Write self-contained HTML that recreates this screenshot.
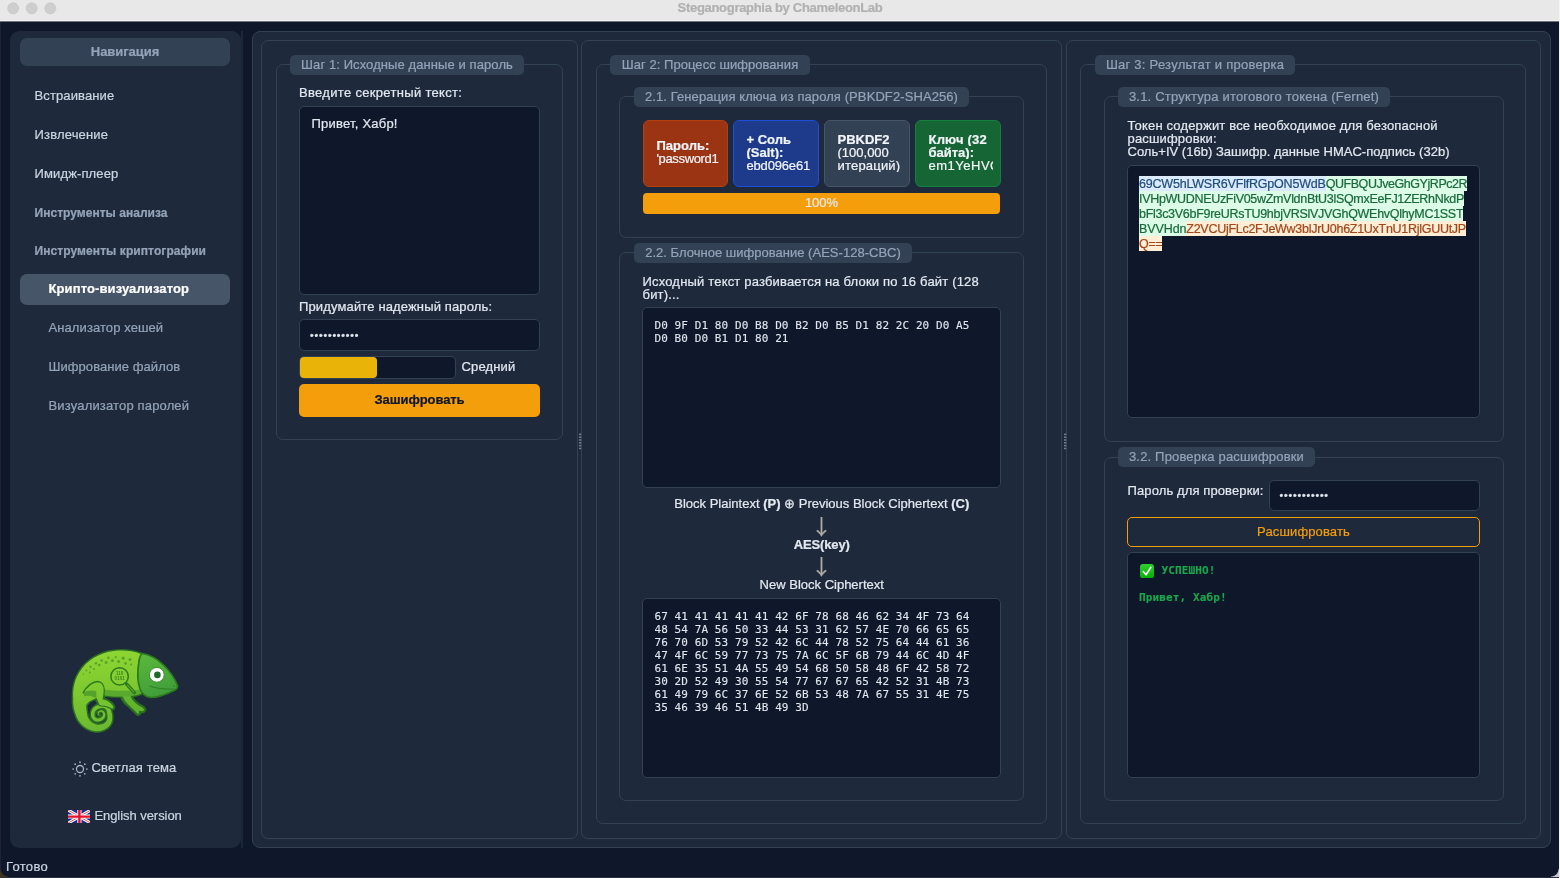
<!DOCTYPE html>
<html lang="ru">
<head>
<meta charset="utf-8">
<title>Steganographia by ChameleonLab</title>
<style>
*{box-sizing:border-box;margin:0;padding:0}
html,body{width:1560px;height:878px;overflow:hidden;background:#0f172a}
body{position:relative;font:13px/16px "Liberation Sans",sans-serif;color:#e2e8f0;will-change:transform;-webkit-font-smoothing:antialiased;-webkit-text-stroke:0.22px}
.a{position:absolute}
.t{position:absolute;white-space:nowrap;height:16px;line-height:16px}
.b{font-weight:bold}
.gb{position:absolute;border:1px solid #334155;border-radius:7px}
.pill{position:absolute;background:#334155;border-radius:5px;color:#94a3b8;height:20px;line-height:20px;white-space:nowrap;text-align:center}
.dark{position:absolute;background:#0f172a;border:1px solid #334155;border-radius:5px}
.mono{font-family:"DejaVu Sans Mono","Liberation Mono",monospace;font-size:11px;-webkit-text-stroke:0.1px}
.col{position:absolute;top:40px;height:799px;border:1px solid #334155;border-radius:7px}
.nav{color:#cbd5e1}
.sub{color:#94a3b8}
.hd{color:#94a3b8;font-weight:bold;font-size:12px}
.kbox{position:absolute;top:120px;width:86px;height:67px;border-radius:6px;border:1px solid;padding:0 0 2.6px 12.5px;line-height:13px;display:flex;flex-direction:column;justify-content:center;white-space:nowrap;color:#f1f5f9}
.kbox>*{display:block;width:64px;overflow:hidden}
.s1{background:#dbeafe;color:#1e4e7c}
.s2{background:#dcfce7;color:#176b3a}
.s3{background:#ffedd5;color:#a0481a}
#tok span{display:inline-block;height:15px;vertical-align:top;line-height:17.6px;overflow:hidden}
.arr{width:20px;height:28px;line-height:28px;text-align:center;font-family:"Noto Sans CJK SC","Liberation Sans",sans-serif;font-size:21px;color:#aeaaa5}
.dots{position:absolute;width:2px;height:1.4px;background:#6f7b8d}
</style>
</head>
<body>
<!-- title bar -->
<div class="a" style="left:0;top:0;width:1560px;height:20px;background:#e8e8e8"></div>
<div class="a" style="left:0;top:20px;width:1560px;height:1px;background:#f1f1f0"></div>
<div class="a" style="left:0;top:21px;width:1560px;height:1px;background:#70737c"></div>
<div class="a" style="left:0;top:22px;width:1px;height:850px;background:#1d2236"></div>
<svg class="a" style="left:0;top:0" width="60" height="16" viewBox="0 0 60 16"><g fill="#cecece" stroke="#c4c4c4" stroke-width="0.7"><circle cx="13.2" cy="8.3" r="5.5"/><circle cx="31.7" cy="8.3" r="5.5"/><circle cx="50.3" cy="8.3" r="5.5"/></g></svg>
<div class="t b" id="title" style="letter-spacing:-0.3px;left:580px;width:400px;top:0.4px;text-align:center;color:#b1b1b1;">Steganographia by ChameleonLab</div>

<!-- sidebar -->
<div class="a" style="left:10px;top:31px;width:231px;height:817px;background:#1e293b;border-radius:9px"></div>
<div class="a" style="left:241px;top:31px;width:2px;height:817px;background:#1c2639"></div>
<div class="pill b" style="letter-spacing:-0.05px;left:20px;top:38px;width:210px;height:28px;line-height:28px;border-radius:7px">Навигация</div>

<div class="t nav" style="letter-spacing:0.12px;left:34.5px;top:88px">Встраивание</div>
<div class="t nav" style="letter-spacing:0.17px;left:34.5px;top:127px">Извлечение</div>
<div class="t nav" style="letter-spacing:0.13px;left:34.5px;top:166px">Имидж-плеер</div>
<div class="t hd" style="letter-spacing:0.03px;left:34.5px;top:204.5px">Инструменты анализа</div>
<div class="t hd" style="letter-spacing:0.08px;left:34.5px;top:242.5px">Инструменты криптографии</div>
<div class="a" style="left:20px;top:274px;width:210px;height:31px;background:#475569;border-radius:7px"></div>
<div class="t b" style="letter-spacing:0.11px;left:48.5px;top:281px;color:#fff">Крипто-визуализатор</div>
<div class="t sub" style="letter-spacing:0.09px;left:48.5px;top:320.4px">Анализатор хешей</div>
<div class="t sub" style="letter-spacing:0.06px;left:48.5px;top:359.4px">Шифрование файлов</div>
<div class="t sub" style="letter-spacing:0.16px;left:48.5px;top:398.3px">Визуализатор паролей</div>

<!-- LOGO -->
<svg viewBox="0 0 130 100" width="130" height="100" style="position:absolute;left:60px;top:640px">
<defs>
<linearGradient id="gb" gradientUnits="userSpaceOnUse" x1="30" y1="10" x2="40" y2="92"><stop offset="0" stop-color="#8fd733"/><stop offset="0.45" stop-color="#7fca2f"/><stop offset="1" stop-color="#69b830"/></linearGradient>
<linearGradient id="gh" x1="0" y1="0" x2="0.3" y2="1"><stop offset="0" stop-color="#5cb83b"/><stop offset="1" stop-color="#409f3a"/></linearGradient>
</defs>
<g fill="url(#gb)" stroke="#2b6e22" stroke-width="3.0" stroke-linejoin="round" stroke-linecap="round"><path d="M61.5,54 C61.5,59 64,62.5 68.3,65.5 C71,68 74,71 77.8,74.6 C79.6,74.2 80.2,72.6 79.4,71.2 C81.3,72.2 83.6,71.8 84.9,70 C84.2,67.6 82,66 79.4,65.3 C75.5,62.5 72,60 71,54 Z" fill="#62b42d"/><path d="M15.6,42.8 L15.4,43.8 L15.2,44.8 L15.0,45.7 L14.8,46.8 L14.6,47.8 L14.4,48.8 L14.2,49.9 L14.0,51.0 L13.8,52.1 L13.7,53.2 L13.6,54.3 L13.5,55.3 L13.4,56.3 L13.3,57.4 L13.3,58.4 L13.2,59.4 L13.2,60.5 L13.2,61.5 L13.2,62.5 L13.3,63.5 L13.4,64.5 L13.5,65.5 L13.6,66.5 L13.8,67.4 L13.9,68.4 L14.1,69.3 L14.4,70.2 L14.6,71.1 L14.8,72.0 L15.1,72.8 L15.4,73.6 L15.7,74.4 L16.0,75.3 L16.3,76.1 L16.6,77.0 L17.0,77.8 L17.5,78.7 L17.9,79.5 L18.4,80.4 L19.0,81.2 L19.6,82.0 L20.2,82.8 L20.8,83.5 L21.5,84.2 L22.2,84.9 L22.9,85.5 L23.6,86.2 L24.3,86.7 L25.1,87.3 L25.8,87.8 L26.6,88.3 L27.4,88.7 L28.2,89.1 L29.0,89.5 L29.8,89.8 L30.6,90.1 L31.4,90.4 L32.2,90.6 L33.0,90.8 L33.7,90.9 L34.5,91.1 L35.3,91.2 L36.0,91.2 L36.8,91.3 L37.5,91.3 L38.2,91.2 L38.9,91.2 L39.6,91.1 L40.3,90.9 L41.0,90.8 L41.7,90.6 L42.4,90.4 L43.2,90.1 L43.9,89.8 L44.6,89.5 L45.3,89.1 L46.0,88.7 L46.7,88.3 L47.3,87.8 L47.9,87.4 L48.5,86.8 L49.0,86.3 L49.5,85.7 L49.9,85.1 L50.3,84.5 L50.7,83.8 L51.1,83.2 L51.4,82.5 L51.6,81.8 L51.8,81.1 L52.0,80.4 L52.1,79.6 L52.2,78.9 L52.2,78.1 L52.2,77.4 L52.2,76.7 L52.1,76.0 L52.1,75.3 L52.0,74.7 L51.9,74.1 L51.8,73.5 L51.6,72.8 L51.5,72.2 L51.3,71.6 L51.1,70.9 L50.9,70.3 L50.7,69.7 L50.4,69.1 L50.1,68.5 L49.7,67.9 L49.3,67.4 L48.9,66.9 L48.4,66.4 L48.0,66.0 L47.5,65.7 L47.0,65.3 L46.5,65.0 L45.9,64.8 L45.4,64.6 L44.9,64.4 L44.3,64.2 L43.7,64.2 L43.1,64.1 L42.6,64.1 L42.0,64.1 L41.5,64.2 L41.0,64.3 L40.5,64.4 L40.0,64.5 L39.6,64.6 L39.1,64.7 L38.6,64.9 L38.0,65.0 L37.5,65.2 L37.0,65.4 L36.4,65.7 L35.9,65.9 L35.4,66.2 L34.9,66.5 L34.4,66.9 L33.9,67.3 L33.5,67.7 L33.2,68.1 L32.8,68.5 L32.5,69.0 L32.2,69.5 L31.9,70.0 L31.7,70.5 L31.5,71.0 L31.3,71.5 L31.2,72.0 L31.1,72.6 L31.0,73.2 L31.0,73.7 L31.0,74.3 L31.0,74.9 L31.0,75.4 L31.1,76.0 L31.2,76.5 L31.4,77.0 L31.6,77.5 L31.8,78.0 L32.1,78.5 L32.4,78.9 L32.7,79.3 L33.1,79.7 L33.5,80.1 L33.9,80.4 L34.3,80.7 L34.8,80.9 L35.3,81.1 L35.8,81.3 L36.3,81.4 L36.8,81.5 L37.3,81.5 L37.9,81.5 L38.4,81.5 L38.9,81.4 L39.4,81.3 L39.8,81.2 L40.3,81.1 L40.8,80.9 L41.3,80.7 L41.7,80.4 L42.1,80.1 L42.6,79.9 L43.0,79.6 L43.3,79.2 L43.7,78.9 L44.0,78.6 L44.3,78.2 L44.5,77.8 L44.7,77.4 L44.9,77.0 L45.0,76.5 L45.1,76.1 L45.2,75.7 L45.3,75.3 L45.3,74.9 L45.3,74.5 L45.3,74.1 L45.2,73.7 L45.1,73.3 L44.9,72.9 L44.7,72.6 L44.5,72.2 L44.3,71.9 L44.1,71.6 L43.9,71.4 L43.6,71.1 L43.3,70.9 L43.0,70.7 L42.7,70.6 L42.4,70.5 L42.0,70.4 L41.7,70.3 L41.4,70.3 L41.0,70.2 L40.7,70.3 L40.4,70.3 L40.1,70.4 L39.8,70.5 L39.5,70.7 L39.2,70.9 L39.0,71.1 L38.7,71.3 L38.5,71.5 L38.3,71.8 L38.2,72.0 L38.0,72.2 L37.9,72.5 L37.8,72.7 L37.8,73.0 L37.8,73.3 L37.7,73.5 L37.8,73.8 L37.8,74.0 L37.8,74.2 L37.9,74.4 L38.0,74.6 L38.1,74.8 L38.2,75.0 L38.4,75.1 L38.5,75.1 L38.7,75.2 L38.9,75.2 L39.0,75.3 L39.2,75.3 L39.3,75.4 L39.4,75.4 L39.6,75.2 L39.5,75.1 L39.3,75.0 L39.2,74.9 L39.0,74.8 L38.9,74.7 L38.8,74.7 L38.7,74.6 L38.7,74.5 L38.6,74.5 L38.6,74.4 L38.6,74.3 L38.6,74.1 L38.6,73.9 L38.6,73.8 L38.7,73.6 L38.7,73.4 L38.7,73.2 L38.8,73.0 L38.9,72.9 L39.0,72.8 L39.1,72.7 L39.2,72.5 L39.4,72.4 L39.6,72.2 L39.7,72.1 L39.9,71.9 L40.1,71.8 L40.3,71.8 L40.5,71.7 L40.6,71.7 L40.8,71.7 L40.9,71.7 L41.1,71.8 L41.4,71.8 L41.6,71.9 L41.8,72.0 L42.0,72.1 L42.1,72.2 L42.3,72.3 L42.4,72.5 L42.5,72.6 L42.6,72.8 L42.7,73.0 L42.8,73.2 L42.9,73.4 L43.0,73.7 L43.1,73.9 L43.1,74.1 L43.1,74.3 L43.1,74.5 L43.1,74.7 L43.0,75.0 L43.0,75.2 L42.9,75.5 L42.8,75.7 L42.6,76.0 L42.5,76.2 L42.4,76.5 L42.2,76.7 L42.0,76.8 L41.8,77.0 L41.6,77.2 L41.3,77.4 L41.0,77.6 L40.7,77.8 L40.4,78.0 L40.1,78.1 L39.7,78.2 L39.4,78.3 L39.2,78.4 L38.9,78.4 L38.5,78.5 L38.2,78.5 L37.9,78.5 L37.5,78.4 L37.2,78.4 L36.9,78.3 L36.6,78.3 L36.4,78.2 L36.2,78.1 L36.0,78.0 L35.8,77.8 L35.7,77.6 L35.5,77.4 L35.3,77.2 L35.1,77.0 L34.9,76.7 L34.8,76.5 L34.7,76.2 L34.6,76.0 L34.5,75.7 L34.5,75.4 L34.4,75.0 L34.4,74.7 L34.4,74.3 L34.4,73.9 L34.5,73.5 L34.5,73.2 L34.6,72.8 L34.7,72.5 L34.8,72.2 L34.9,71.9 L35.1,71.6 L35.2,71.3 L35.4,71.0 L35.7,70.7 L35.9,70.4 L36.1,70.2 L36.4,69.9 L36.6,69.7 L36.9,69.5 L37.2,69.3 L37.5,69.2 L37.9,69.0 L38.3,68.8 L38.7,68.7 L39.2,68.5 L39.6,68.4 L40.0,68.3 L40.4,68.2 L40.8,68.1 L41.2,68.0 L41.6,68.0 L42.0,67.9 L42.4,67.9 L42.7,67.9 L43.0,67.9 L43.2,67.9 L43.5,67.9 L43.7,68.0 L44.0,68.1 L44.3,68.3 L44.6,68.4 L44.9,68.6 L45.2,68.8 L45.4,69.1 L45.7,69.3 L45.9,69.6 L46.1,69.8 L46.3,70.1 L46.4,70.4 L46.6,70.8 L46.7,71.2 L46.8,71.6 L46.9,72.1 L47.0,72.6 L47.1,73.1 L47.2,73.6 L47.3,74.2 L47.3,74.7 L47.4,75.3 L47.4,75.8 L47.5,76.4 L47.5,76.9 L47.5,77.5 L47.5,78.0 L47.4,78.5 L47.4,78.9 L47.3,79.3 L47.2,79.7 L47.0,80.0 L46.8,80.4 L46.6,80.8 L46.3,81.2 L46.1,81.6 L45.8,81.9 L45.5,82.2 L45.1,82.5 L44.8,82.8 L44.5,83.0 L44.1,83.3 L43.7,83.5 L43.3,83.7 L42.8,83.9 L42.3,84.0 L41.8,84.2 L41.3,84.3 L40.8,84.4 L40.2,84.5 L39.8,84.6 L39.3,84.7 L38.8,84.7 L38.4,84.7 L38.0,84.7 L37.6,84.7 L37.2,84.7 L36.7,84.6 L36.3,84.5 L35.9,84.4 L35.5,84.3 L35.0,84.1 L34.5,83.9 L34.0,83.6 L33.5,83.4 L33.0,83.1 L32.5,82.8 L32.0,82.5 L31.6,82.1 L31.2,81.8 L30.8,81.4 L30.4,81.0 L30.0,80.6 L29.7,80.1 L29.3,79.6 L29.0,79.0 L28.6,78.5 L28.3,78.0 L28.0,77.4 L27.8,76.9 L27.6,76.4 L27.4,75.9 L27.3,75.4 L27.2,74.8 L27.1,74.2 L27.0,73.6 L26.9,73.0 L26.8,72.3 L26.7,71.6 L26.6,70.9 L26.5,70.2 L26.4,69.5 L26.3,68.8 L26.3,68.1 L26.2,67.4 L26.2,66.7 L26.1,66.0 L26.1,65.3 L26.1,64.5 L26.1,63.8 L26.1,63.1 L26.1,62.3 L26.1,61.6 L26.2,60.8 L26.2,60.0 L26.3,59.1 L26.3,58.3 L26.4,57.4 L26.5,56.6 L26.6,55.7 L26.7,54.8 L26.8,53.9 L27.0,53.1 L27.1,52.2 L27.3,51.3 L27.5,50.3 L27.6,49.3 L27.8,48.3 L28.0,47.3 L28.3,46.2 L28.4,45.2Z"/><path d="M81,14 C72,10.5 62,10 54,11 C40,12.5 27,20 19.5,32 C15,39 12.9,47 13.2,57 L26.4,65 C28,62 32,59.5 36.1,58.6 L43.3,58.6 L44,55 C50,56.5 58,56.5 64,56 C70,56 76,55.5 81,53.5 Z"/><path d="M36.1,58.6 C37,60.5 37.6,62 38.3,63.8 C38.6,65.2 39.5,66 41,66 C44,66 47,66.5 49.7,68.1 C51.5,69.2 53,69.3 53.8,68.3 C54.3,67 53.9,66 53,65 C51,62.6 47.5,60 43.3,59 L43.6,54 L36,54 Z"/></g>
<g fill="url(#gb)"><path d="M61.5,54 C61.5,59 64,62.5 68.3,65.5 C71,68 74,71 77.8,74.6 C79.6,74.2 80.2,72.6 79.4,71.2 C81.3,72.2 83.6,71.8 84.9,70 C84.2,67.6 82,66 79.4,65.3 C75.5,62.5 72,60 71,54 Z" fill="#62b42d"/><path d="M15.6,42.8 L15.4,43.8 L15.2,44.8 L15.0,45.7 L14.8,46.8 L14.6,47.8 L14.4,48.8 L14.2,49.9 L14.0,51.0 L13.8,52.1 L13.7,53.2 L13.6,54.3 L13.5,55.3 L13.4,56.3 L13.3,57.4 L13.3,58.4 L13.2,59.4 L13.2,60.5 L13.2,61.5 L13.2,62.5 L13.3,63.5 L13.4,64.5 L13.5,65.5 L13.6,66.5 L13.8,67.4 L13.9,68.4 L14.1,69.3 L14.4,70.2 L14.6,71.1 L14.8,72.0 L15.1,72.8 L15.4,73.6 L15.7,74.4 L16.0,75.3 L16.3,76.1 L16.6,77.0 L17.0,77.8 L17.5,78.7 L17.9,79.5 L18.4,80.4 L19.0,81.2 L19.6,82.0 L20.2,82.8 L20.8,83.5 L21.5,84.2 L22.2,84.9 L22.9,85.5 L23.6,86.2 L24.3,86.7 L25.1,87.3 L25.8,87.8 L26.6,88.3 L27.4,88.7 L28.2,89.1 L29.0,89.5 L29.8,89.8 L30.6,90.1 L31.4,90.4 L32.2,90.6 L33.0,90.8 L33.7,90.9 L34.5,91.1 L35.3,91.2 L36.0,91.2 L36.8,91.3 L37.5,91.3 L38.2,91.2 L38.9,91.2 L39.6,91.1 L40.3,90.9 L41.0,90.8 L41.7,90.6 L42.4,90.4 L43.2,90.1 L43.9,89.8 L44.6,89.5 L45.3,89.1 L46.0,88.7 L46.7,88.3 L47.3,87.8 L47.9,87.4 L48.5,86.8 L49.0,86.3 L49.5,85.7 L49.9,85.1 L50.3,84.5 L50.7,83.8 L51.1,83.2 L51.4,82.5 L51.6,81.8 L51.8,81.1 L52.0,80.4 L52.1,79.6 L52.2,78.9 L52.2,78.1 L52.2,77.4 L52.2,76.7 L52.1,76.0 L52.1,75.3 L52.0,74.7 L51.9,74.1 L51.8,73.5 L51.6,72.8 L51.5,72.2 L51.3,71.6 L51.1,70.9 L50.9,70.3 L50.7,69.7 L50.4,69.1 L50.1,68.5 L49.7,67.9 L49.3,67.4 L48.9,66.9 L48.4,66.4 L48.0,66.0 L47.5,65.7 L47.0,65.3 L46.5,65.0 L45.9,64.8 L45.4,64.6 L44.9,64.4 L44.3,64.2 L43.7,64.2 L43.1,64.1 L42.6,64.1 L42.0,64.1 L41.5,64.2 L41.0,64.3 L40.5,64.4 L40.0,64.5 L39.6,64.6 L39.1,64.7 L38.6,64.9 L38.0,65.0 L37.5,65.2 L37.0,65.4 L36.4,65.7 L35.9,65.9 L35.4,66.2 L34.9,66.5 L34.4,66.9 L33.9,67.3 L33.5,67.7 L33.2,68.1 L32.8,68.5 L32.5,69.0 L32.2,69.5 L31.9,70.0 L31.7,70.5 L31.5,71.0 L31.3,71.5 L31.2,72.0 L31.1,72.6 L31.0,73.2 L31.0,73.7 L31.0,74.3 L31.0,74.9 L31.0,75.4 L31.1,76.0 L31.2,76.5 L31.4,77.0 L31.6,77.5 L31.8,78.0 L32.1,78.5 L32.4,78.9 L32.7,79.3 L33.1,79.7 L33.5,80.1 L33.9,80.4 L34.3,80.7 L34.8,80.9 L35.3,81.1 L35.8,81.3 L36.3,81.4 L36.8,81.5 L37.3,81.5 L37.9,81.5 L38.4,81.5 L38.9,81.4 L39.4,81.3 L39.8,81.2 L40.3,81.1 L40.8,80.9 L41.3,80.7 L41.7,80.4 L42.1,80.1 L42.6,79.9 L43.0,79.6 L43.3,79.2 L43.7,78.9 L44.0,78.6 L44.3,78.2 L44.5,77.8 L44.7,77.4 L44.9,77.0 L45.0,76.5 L45.1,76.1 L45.2,75.7 L45.3,75.3 L45.3,74.9 L45.3,74.5 L45.3,74.1 L45.2,73.7 L45.1,73.3 L44.9,72.9 L44.7,72.6 L44.5,72.2 L44.3,71.9 L44.1,71.6 L43.9,71.4 L43.6,71.1 L43.3,70.9 L43.0,70.7 L42.7,70.6 L42.4,70.5 L42.0,70.4 L41.7,70.3 L41.4,70.3 L41.0,70.2 L40.7,70.3 L40.4,70.3 L40.1,70.4 L39.8,70.5 L39.5,70.7 L39.2,70.9 L39.0,71.1 L38.7,71.3 L38.5,71.5 L38.3,71.8 L38.2,72.0 L38.0,72.2 L37.9,72.5 L37.8,72.7 L37.8,73.0 L37.8,73.3 L37.7,73.5 L37.8,73.8 L37.8,74.0 L37.8,74.2 L37.9,74.4 L38.0,74.6 L38.1,74.8 L38.2,75.0 L38.4,75.1 L38.5,75.1 L38.7,75.2 L38.9,75.2 L39.0,75.3 L39.2,75.3 L39.3,75.4 L39.4,75.4 L39.6,75.2 L39.5,75.1 L39.3,75.0 L39.2,74.9 L39.0,74.8 L38.9,74.7 L38.8,74.7 L38.7,74.6 L38.7,74.5 L38.6,74.5 L38.6,74.4 L38.6,74.3 L38.6,74.1 L38.6,73.9 L38.6,73.8 L38.7,73.6 L38.7,73.4 L38.7,73.2 L38.8,73.0 L38.9,72.9 L39.0,72.8 L39.1,72.7 L39.2,72.5 L39.4,72.4 L39.6,72.2 L39.7,72.1 L39.9,71.9 L40.1,71.8 L40.3,71.8 L40.5,71.7 L40.6,71.7 L40.8,71.7 L40.9,71.7 L41.1,71.8 L41.4,71.8 L41.6,71.9 L41.8,72.0 L42.0,72.1 L42.1,72.2 L42.3,72.3 L42.4,72.5 L42.5,72.6 L42.6,72.8 L42.7,73.0 L42.8,73.2 L42.9,73.4 L43.0,73.7 L43.1,73.9 L43.1,74.1 L43.1,74.3 L43.1,74.5 L43.1,74.7 L43.0,75.0 L43.0,75.2 L42.9,75.5 L42.8,75.7 L42.6,76.0 L42.5,76.2 L42.4,76.5 L42.2,76.7 L42.0,76.8 L41.8,77.0 L41.6,77.2 L41.3,77.4 L41.0,77.6 L40.7,77.8 L40.4,78.0 L40.1,78.1 L39.7,78.2 L39.4,78.3 L39.2,78.4 L38.9,78.4 L38.5,78.5 L38.2,78.5 L37.9,78.5 L37.5,78.4 L37.2,78.4 L36.9,78.3 L36.6,78.3 L36.4,78.2 L36.2,78.1 L36.0,78.0 L35.8,77.8 L35.7,77.6 L35.5,77.4 L35.3,77.2 L35.1,77.0 L34.9,76.7 L34.8,76.5 L34.7,76.2 L34.6,76.0 L34.5,75.7 L34.5,75.4 L34.4,75.0 L34.4,74.7 L34.4,74.3 L34.4,73.9 L34.5,73.5 L34.5,73.2 L34.6,72.8 L34.7,72.5 L34.8,72.2 L34.9,71.9 L35.1,71.6 L35.2,71.3 L35.4,71.0 L35.7,70.7 L35.9,70.4 L36.1,70.2 L36.4,69.9 L36.6,69.7 L36.9,69.5 L37.2,69.3 L37.5,69.2 L37.9,69.0 L38.3,68.8 L38.7,68.7 L39.2,68.5 L39.6,68.4 L40.0,68.3 L40.4,68.2 L40.8,68.1 L41.2,68.0 L41.6,68.0 L42.0,67.9 L42.4,67.9 L42.7,67.9 L43.0,67.9 L43.2,67.9 L43.5,67.9 L43.7,68.0 L44.0,68.1 L44.3,68.3 L44.6,68.4 L44.9,68.6 L45.2,68.8 L45.4,69.1 L45.7,69.3 L45.9,69.6 L46.1,69.8 L46.3,70.1 L46.4,70.4 L46.6,70.8 L46.7,71.2 L46.8,71.6 L46.9,72.1 L47.0,72.6 L47.1,73.1 L47.2,73.6 L47.3,74.2 L47.3,74.7 L47.4,75.3 L47.4,75.8 L47.5,76.4 L47.5,76.9 L47.5,77.5 L47.5,78.0 L47.4,78.5 L47.4,78.9 L47.3,79.3 L47.2,79.7 L47.0,80.0 L46.8,80.4 L46.6,80.8 L46.3,81.2 L46.1,81.6 L45.8,81.9 L45.5,82.2 L45.1,82.5 L44.8,82.8 L44.5,83.0 L44.1,83.3 L43.7,83.5 L43.3,83.7 L42.8,83.9 L42.3,84.0 L41.8,84.2 L41.3,84.3 L40.8,84.4 L40.2,84.5 L39.8,84.6 L39.3,84.7 L38.8,84.7 L38.4,84.7 L38.0,84.7 L37.6,84.7 L37.2,84.7 L36.7,84.6 L36.3,84.5 L35.9,84.4 L35.5,84.3 L35.0,84.1 L34.5,83.9 L34.0,83.6 L33.5,83.4 L33.0,83.1 L32.5,82.8 L32.0,82.5 L31.6,82.1 L31.2,81.8 L30.8,81.4 L30.4,81.0 L30.0,80.6 L29.7,80.1 L29.3,79.6 L29.0,79.0 L28.6,78.5 L28.3,78.0 L28.0,77.4 L27.8,76.9 L27.6,76.4 L27.4,75.9 L27.3,75.4 L27.2,74.8 L27.1,74.2 L27.0,73.6 L26.9,73.0 L26.8,72.3 L26.7,71.6 L26.6,70.9 L26.5,70.2 L26.4,69.5 L26.3,68.8 L26.3,68.1 L26.2,67.4 L26.2,66.7 L26.1,66.0 L26.1,65.3 L26.1,64.5 L26.1,63.8 L26.1,63.1 L26.1,62.3 L26.1,61.6 L26.2,60.8 L26.2,60.0 L26.3,59.1 L26.3,58.3 L26.4,57.4 L26.5,56.6 L26.6,55.7 L26.7,54.8 L26.8,53.9 L27.0,53.1 L27.1,52.2 L27.3,51.3 L27.5,50.3 L27.6,49.3 L27.8,48.3 L28.0,47.3 L28.3,46.2 L28.4,45.2Z"/><path d="M81,14 C72,10.5 62,10 54,11 C40,12.5 27,20 19.5,32 C15,39 12.9,47 13.2,57 L26.4,65 C28,62 32,59.5 36.1,58.6 L43.3,58.6 L44,55 C50,56.5 58,56.5 64,56 C70,56 76,55.5 81,53.5 Z"/><path d="M36.1,58.6 C37,60.5 37.6,62 38.3,63.8 C38.6,65.2 39.5,66 41,66 C44,66 47,66.5 49.7,68.1 C51.5,69.2 53,69.3 53.8,68.3 C54.3,67 53.9,66 53,65 C51,62.6 47.5,60 43.3,59 L43.6,54 L36,54 Z"/></g>
<path d="M36.1,58.6 C37,60.5 37.6,62 38.3,63.8 C38.6,65.2 39.5,66 41,66 C44,66 47,66.5 49.7,68.1 C51.5,69.2 53,69.3 53.8,68.3 C54.3,67 53.9,66 53,65 C51,62.6 47.5,60 43.3,59" fill="none" stroke="#2b6e22" stroke-width="1.2" stroke-linecap="round" stroke-linejoin="round"/>
<path d="M62.3,57 C63.3,60.5 65.5,63.3 68.3,65.5 C71,68 74,71 77.8,74.6 C79.6,74.2 80.2,72.6 79.4,71.2 C81.3,72.2 83.6,71.8 84.9,70 C84.2,67.6 82,66 79.4,65.3 C75.8,62.8 72.6,60.5 71.3,56.3" fill="none" stroke="#2b6e22" stroke-width="1.2" stroke-linecap="round" stroke-linejoin="round"/>
<path d="M44,55.2 C50,56.7 58,56.7 64,56.2 C70,56.2 76,55.7 81,53.7 L81,49.5 C70,51 55,51.5 44.5,49.5 Z" fill="#55a22e" opacity="0.85"/>
<path d="M23.1,52.9 C27,50.5 32,50 36.3,51.2 L36.4,58.6 C33,56 28,54.8 24.5,56.3 Z" fill="#4d9a2b" opacity="0.85"/>
<path d="M23.1,52.7 C27,46 32,42 37.5,41.5 C41.5,41.5 44,45 44.3,49.7 C44.5,53 43.8,56 43.3,58.6" fill="none" stroke="#2c7a1f" stroke-width="1.3" stroke-linecap="round"/>
<path d="M82,13.5 C90,14.5 98,19.5 104,25.5 C110,31.5 115,39 117.5,45.5 C118,48 116.5,49.5 114,50.5 C107,54 98,57.5 91,57.5 C86,57 82,54 80,49 C77.5,42 77.5,30 79,21 C79.5,17.5 80.5,15 82,13.5 Z" fill="url(#gh)" stroke="#2c7a1f" stroke-width="1.7" stroke-linejoin="round"/>
<path d="M89.5,46 C96,48.5 106,49.5 114,49" fill="none" stroke="#2f7f20" stroke-width="1"/>
<circle cx="114" cy="46" r="0.7" fill="#2a6e1e"/>
<g fill="#5aa62a"><circle cx="48.4" cy="17.7" r="1.3"/><circle cx="55.8" cy="17.1" r="1.1"/><circle cx="63.2" cy="18.2" r="1.6"/><circle cx="70" cy="19.4" r="1.5"/><circle cx="41.6" cy="20.5" r="1.3"/><circle cx="52.4" cy="20.5" r="1.5"/><circle cx="58.7" cy="21.6" r="1.5"/><circle cx="65.5" cy="23.3" r="1.4"/><circle cx="71.2" cy="24.5" r="1.0"/><circle cx="46.1" cy="22.6" r="1.5"/><circle cx="35.9" cy="23.3" r="1.2"/><circle cx="39.3" cy="25" r="1.3"/><circle cx="30.5" cy="26.8" r="1.2"/><circle cx="33.9" cy="29" r="1.1"/><circle cx="26.4" cy="30.5" r="1.0"/><circle cx="29.8" cy="32.5" r="1.0"/><circle cx="23.3" cy="34.2" r="0.8"/></g>
<circle cx="96.8" cy="34.8" r="7.4" fill="#fff" stroke="#3c8f2c" stroke-width="1"/>
<circle cx="97.4" cy="34.9" r="3.3" fill="#1f6a2b"/>
<path d="M66.6,44 L74.3,52.6" stroke="#2c7a1f" stroke-width="3.4" stroke-linecap="round"/>
<path d="M67.6,45.2 L73.6,51.8" stroke="#5da52c" stroke-width="1.1" stroke-linecap="round"/>
<circle cx="59.6" cy="36.4" r="8.7" fill="#86cf30" stroke="#2c7a1f" stroke-width="1.5"/>
<text x="59.7" y="35.4" font-family="Liberation Sans, sans-serif" font-weight="bold" font-size="4.6" fill="#3a8a26" text-anchor="middle">110</text>
<text x="59.7" y="40.3" font-family="Liberation Sans, sans-serif" font-weight="bold" font-size="4.6" fill="#3a8a26" text-anchor="middle">0101</text>
</svg>
<svg class="a" style="left:71.9px;top:760.8px" width="16" height="16" viewBox="0 0 16 16"><circle cx="8" cy="8" r="3.5" fill="none" stroke="#aab5c5" stroke-width="1.3"/><g fill="#aab5c5"><circle cx="14.80" cy="8.00" r="0.85"/><circle cx="12.81" cy="12.81" r="0.85"/><circle cx="8.00" cy="14.80" r="0.85"/><circle cx="3.19" cy="12.81" r="0.85"/><circle cx="1.20" cy="8.00" r="0.85"/><circle cx="3.19" cy="3.19" r="0.85"/><circle cx="8.00" cy="1.20" r="0.85"/><circle cx="12.81" cy="3.19" r="0.85"/></g></svg>
<div class="t" id="theme" style="letter-spacing:0.14px;left:91.5px;top:760px;color:#cbd5e1">Светлая тема</div>
<svg class="a" style="left:67.7px;top:809.9px" width="22.8" height="13.2" viewBox="0 0 60 36" preserveAspectRatio="none"><clipPath id="fc"><rect width="60" height="36"/></clipPath><g clip-path="url(#fc)"><rect width="60" height="36" fill="#1c2f8c"/><path d="M0,0 L60,36 M60,0 L0,36" stroke="#fff" stroke-width="8"/><path d="M0,0 L60,36 M60,0 L0,36" stroke="#e8112d" stroke-width="2"/><path d="M30,0 V36 M0,18 H60" stroke="#fff" stroke-width="11"/><path d="M30,0 V36 M0,18 H60" stroke="#e8112d" stroke-width="6.5"/></g></svg>
<div class="t" id="lang" style="letter-spacing:-0.05px;left:94.4px;top:808px;color:#cbd5e1">English version</div>

<div class="t" style="letter-spacing:0.31px;left:6px;top:859.4px;color:#cbd5e1">Готово</div>
<div class="a" style="left:0;top:877px;width:1560px;height:1px;background:#2a3040"></div>

<div class="a" style="left:1559px;top:0;width:1px;height:878px;background:#f4f4f4"></div>
<div class="a" style="left:1551px;top:869px;width:8px;height:8px;background:radial-gradient(circle at 0 0,rgba(15,23,42,0) 7px,#c9c9cc 8px)"></div>
<div class="a" style="left:0;top:869px;width:8px;height:8px;background:radial-gradient(circle at 8px 0,rgba(15,23,42,0) 7px,#43361c 8px)"></div>
<!-- main container -->
<div class="a" style="left:252px;top:31px;width:1299px;height:817px;background:#1e293b;border:1px solid #334155;border-radius:8px"></div>
<div class="col" style="left:261px;width:317px"></div>
<div class="col" style="left:581px;width:481px"></div>
<div class="col" style="left:1066px;width:475px"></div>

<!-- STEP 1 -->
<div class="gb" style="left:276px;top:64px;width:287px;height:376px"></div>
<div class="pill" style="letter-spacing:0.09px;left:290px;top:55px;width:234px">Шаг 1: Исходные данные и пароль</div>
<div class="t" style="letter-spacing:0.32px;left:299px;top:85.4px">Введите секретный текст:</div>
<div class="dark" style="left:299px;top:106px;width:241px;height:189px"></div>
<div class="t" style="letter-spacing:0.22px;left:311.5px;top:116.4px">Привет, Хабр!</div>
<div class="t" style="letter-spacing:0.14px;left:299px;top:298.5px">Придумайте надежный пароль:</div>
<div class="dark" style="left:299px;top:319px;width:241px;height:32px"></div>
<div class="t" id="pw1" style="left:310px;top:326.8px;font-size:10.5px;letter-spacing:0.8px">•••••••••••</div>
<div class="dark" style="left:299px;top:356px;width:157px;height:23px"></div>
<div class="a" style="left:300px;top:357px;width:77px;height:21px;background:#eab308;border-radius:4px"></div>
<div class="t" style="letter-spacing:0.14px;left:461.5px;top:359px">Средний</div>
<div class="a b" style="letter-spacing:-0.08px;left:299px;top:384px;width:241px;height:33px;background:#f59e0b;border-radius:5px;color:#0f172a;text-align:center;line-height:32px">Зашифровать</div>

<!-- splitters -->
<svg class="a" style="left:579.4px;top:433px" width="3" height="17" viewBox="0 0 3 17" fill="#75808f"><rect x="0" y="0.60" width="2.2" height="1.5"/><rect x="0" y="3.42" width="2.2" height="1.5"/><rect x="0" y="6.24" width="2.2" height="1.5"/><rect x="0" y="9.06" width="2.2" height="1.5"/><rect x="0" y="11.88" width="2.2" height="1.5"/><rect x="0" y="14.70" width="2.2" height="1.5"/></svg><svg class="a" style="left:1063.9px;top:433px" width="3" height="17" viewBox="0 0 3 17" fill="#75808f"><rect x="0" y="0.60" width="2.2" height="1.5"/><rect x="0" y="3.42" width="2.2" height="1.5"/><rect x="0" y="6.24" width="2.2" height="1.5"/><rect x="0" y="9.06" width="2.2" height="1.5"/><rect x="0" y="11.88" width="2.2" height="1.5"/><rect x="0" y="14.70" width="2.2" height="1.5"/></svg>

<!-- STEP 2 -->
<div class="gb" style="left:596px;top:64px;width:451px;height:760px"></div>
<div class="pill" style="letter-spacing:0.05px;left:610px;top:55px;width:200px">Шаг 2: Процесс шифрования</div>

<div class="gb" style="left:619px;top:96px;width:405px;height:142px"></div>
<div class="pill" style="letter-spacing:0.09px;left:634px;top:87px;width:335px">2.1. Генерация ключа из пароля (PBKDF2-SHA256)</div>
<div class="kbox" style="left:643px;width:85px;background:#9a3412;border-color:#b4400f"><b>Пароль:</b><span style="letter-spacing:-0.36px">'password1</span></div>
<div class="kbox" style="left:733px;background:#1e3a8a;border-color:#1d4ed8"><b>+ Соль</b><b>(Salt):</b><span style="letter-spacing:-0.17px">ebd096e61</span></div>
<div class="kbox" style="left:824px;background:#334155;border-color:#475569"><b>PBKDF2</b><span>(100,000</span><span style="letter-spacing:0.2px">итераций)</span></div>
<div class="kbox" style="left:915px;background:#166534;border-color:#15803d"><b style="letter-spacing:0.2px">Ключ (32</b><b>байта):</b><span style="letter-spacing:0.5px">em1YeHVC</span></div>
<div class="a" style="left:643px;top:193px;width:357px;height:21px;background:#f59e0b;border-radius:4px;text-align:center;line-height:20px;color:#e2e8f0">100%</div>

<div class="gb" style="left:619px;top:252px;width:405px;height:549px"></div>
<div class="pill" style="letter-spacing:0.02px;left:634px;top:243px;width:278px">2.2. Блочное шифрование (AES-128-CBC)</div>
<div class="t" style="letter-spacing:0.18px;left:642.5px;top:274.8px;line-height:13px;height:26px;white-space:normal;width:360px">Исходный текст разбивается на блоки по 16 байт (128 бит)...</div>
<div class="dark" style="left:642px;top:307px;width:359px;height:181px"></div>
<div class="a mono" style="left:654.5px;top:319px;line-height:13.2px;white-space:pre;letter-spacing:0.08px">D0 9F D1 80 D0 B8 D0 B2 D0 B5 D1 82 2C 20 D0 A5
D0 B0 D0 B1 D1 80 21</div>
<div class="t" style="left:642.5px;width:358.5px;top:495.5px;text-align:center">Block Plaintext <b>(P)</b> ⊕ Previous Block Ciphertext <b>(C)</b></div>
<div class="a arr" style="left:811.1px;top:511.4px">↓</div>
<div class="t b" style="letter-spacing:-0.14px;left:642.5px;width:358.5px;top:537px;text-align:center">AES(key)</div>
<div class="a arr" style="left:811.1px;top:551.3px">↓</div>
<div class="t" style="left:642.5px;width:358.5px;top:577px;text-align:center">New Block Ciphertext</div>
<div class="dark" style="left:642px;top:598px;width:359px;height:180px"></div>
<div class="a mono" style="left:654.5px;top:610px;line-height:13px;white-space:pre;letter-spacing:0.08px">67 41 41 41 41 41 42 6F 78 68 46 62 34 4F 73 64
48 54 7A 56 50 33 44 53 31 62 57 4E 70 66 65 65
76 70 6D 53 79 52 42 6C 44 78 52 75 64 44 61 36
47 4F 6C 59 77 73 75 7A 6C 5F 6B 79 44 6C 4D 4F
61 6E 35 51 4A 55 49 54 68 50 58 48 6F 42 58 72
30 2D 52 49 30 55 54 77 67 67 65 42 52 31 4B 73
61 49 79 6C 37 6E 52 6B 53 48 7A 67 55 31 4E 75
35 46 39 46 51 4B 49 3D</div>

<!-- STEP 3 -->
<div class="gb" style="left:1080px;top:64px;width:446px;height:760px"></div>
<div class="pill" style="letter-spacing:0.25px;left:1095px;top:55px;width:200px">Шаг 3: Результат и проверка</div>

<div class="gb" style="left:1104px;top:96px;width:400px;height:346px"></div>
<div class="pill" style="letter-spacing:0.2px;left:1118px;top:87px;width:272px">3.1. Структура итогового токена (Fernet)</div>
<div class="t" style="left:1127.5px;top:119px;line-height:13px;height:39px;white-space:normal;width:340px"><span style="letter-spacing:0.17px">Токен содержит все необходимое для безопасной расшифровки:</span><br><span style="letter-spacing:0.02px">Соль+IV (16b) Зашифр. данные HMAC-подпись (32b)</span></div>
<div class="dark" style="left:1127px;top:165px;width:353px;height:253px"></div>
<div class="a" id="tok" style="left:1139px;top:176px;font-size:12.5px;line-height:15px;letter-spacing:-0.31px;white-space:nowrap"><span class="s1" style="letter-spacing:-0.2px">69CW5hLWSR6VFlfRGpON5WdB</span><span class="s2" style="letter-spacing:-0.45px">QUFBQUJveGhGYjRPc2R</span><br><span class="s2">IVHpWUDNEUzFiV05wZmVldnBtU3lSQmxEeFJ1ZERhNkdP</span><br><span class="s2" style="letter-spacing:-0.29px">bFl3c3V6bF9reURsTU9hbjVRSlVJVGhQWEhvQlhyMC1SST</span><br><span class="s2" style="letter-spacing:-0.1px">BVVHdn</span><span class="s3" style="letter-spacing:-0.28px">Z2VCUjFLc2FJeWw3blJrU0h6Z1UxTnU1RjlGUUtJP</span><br><span class="s3">Q==</span></div>

<div class="gb" style="left:1104px;top:457px;width:400px;height:344px"></div>
<div class="pill" style="letter-spacing:0.17px;left:1118px;top:447px;width:197px">3.2. Проверка расшифровки</div>
<div class="t" style="letter-spacing:0.11px;left:1127.5px;top:482.5px">Пароль для проверки:</div>
<div class="dark" style="left:1269px;top:480px;width:211px;height:31px"></div>
<div class="t" id="pw2" style="left:1279.6px;top:487.2px;font-size:10.5px;letter-spacing:0.8px">•••••••••••</div>
<div class="a" style="letter-spacing:0.14px;left:1127px;top:517px;width:353px;height:30px;border:1px solid #f59e0b;border-radius:5px;color:#f59e0b;text-align:center;line-height:28px">Расшифровать</div>
<div class="dark" style="left:1127px;top:552px;width:353px;height:226px"></div>
<svg class="a" style="left:1140.2px;top:563.5px" width="14" height="14.4" viewBox="0 0 14 14.4"><defs><linearGradient id="cg" x1="0" y1="0" x2="0" y2="1"><stop offset="0" stop-color="#2fd02f"/><stop offset="1" stop-color="#06ad06"/></linearGradient></defs><rect width="14" height="14.4" rx="3" fill="url(#cg)"/><path d="M3.2,7.6 L6,10.8 L10.8,3.4" fill="none" stroke="#fff" stroke-width="1.6" stroke-linecap="round" stroke-linejoin="round"/></svg>
<div class="t mono b" style="left:1161.5px;top:563px;color:#19a84c;letter-spacing:0.12px">УСПЕШНО!</div>
<div class="t mono b" style="left:1139px;top:590px;color:#19a84c;letter-spacing:0.12px">Привет, Хабр!</div>
</body>
</html>
